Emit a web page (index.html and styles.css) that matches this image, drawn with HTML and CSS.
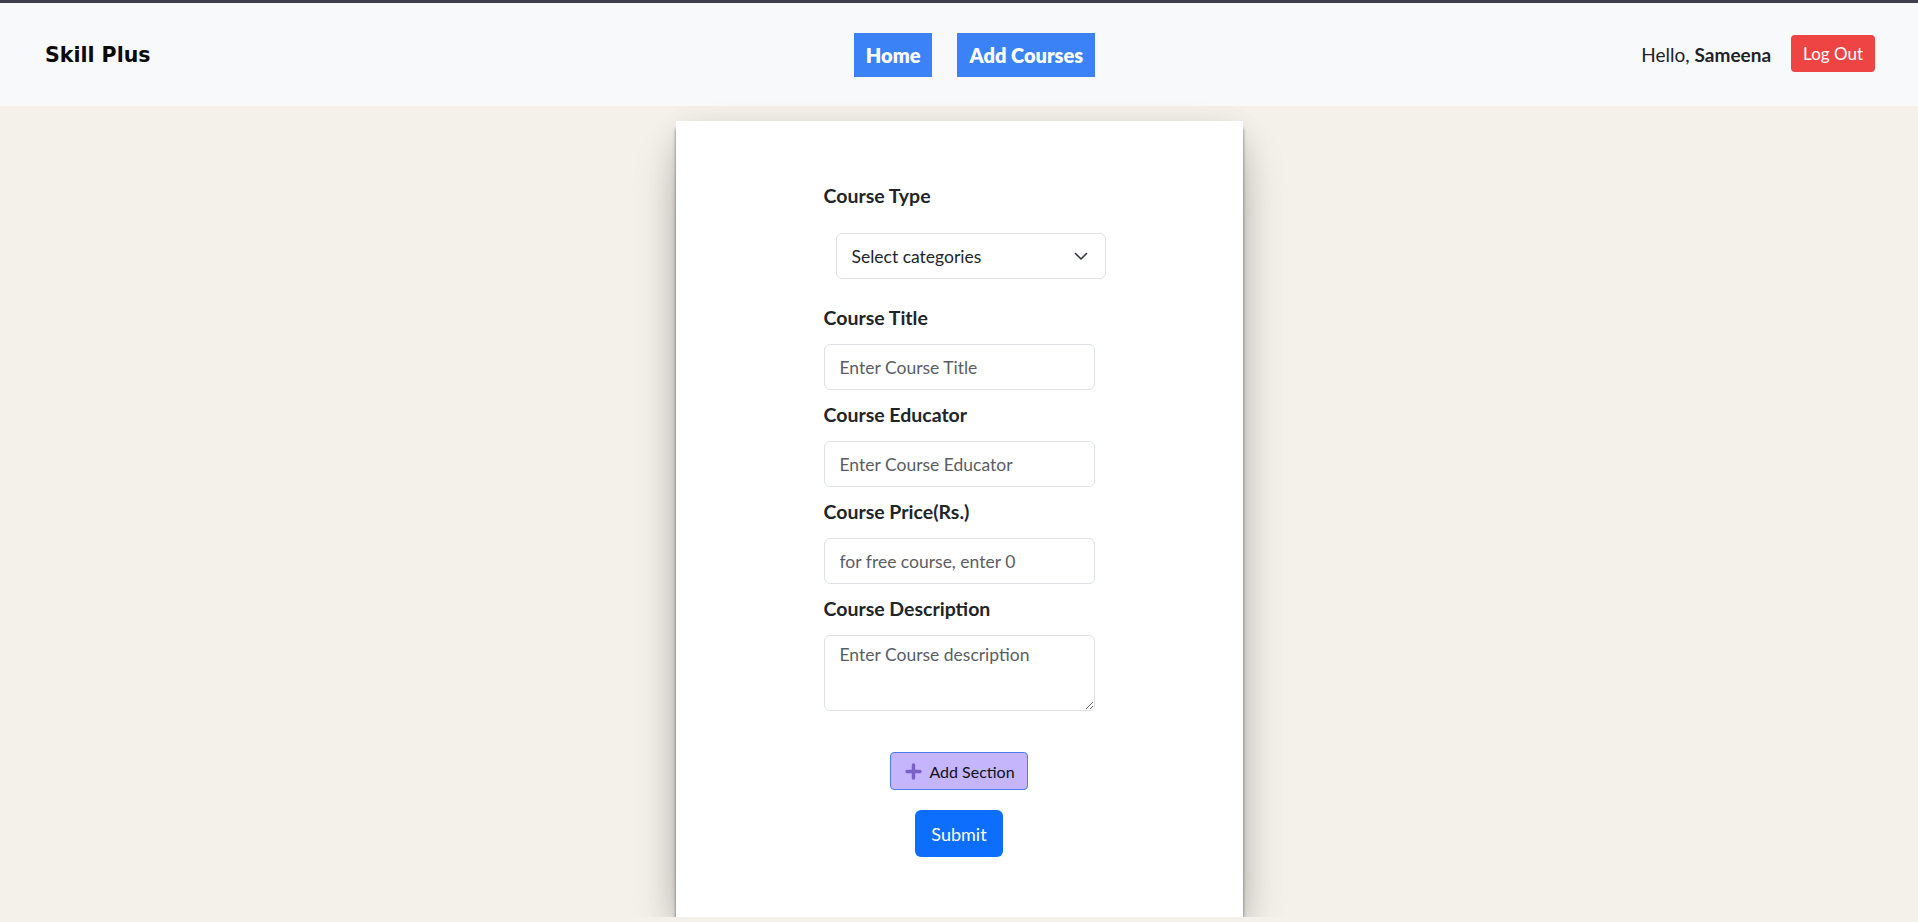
FILE: index.html
```html
<!DOCTYPE html>
<html lang="en">
<head>
<meta charset="utf-8">
<title>Skill Plus</title>
<link rel="stylesheet" href="styles.css">
</head>
<body>
<header class="navbar">
  <div class="brand">Skill Plus</div>
  <nav class="nav-links">
    <a class="nav-btn" href="#">Home</a>
    <a class="nav-btn" href="#">Add Courses</a>
  </nav>
  <div class="user">
    <span class="hello">Hello, <b>Sameena</b></span>
    <button class="logout" type="button">Log Out</button>
  </div>
</header>
<main class="page">
  <section class="card">
    <form class="course-form">
      <div class="field">
        <label class="field-label">Course Type</label>
        <div class="select-wrap">
          <select class="select">
            <option>Select categories</option>
          </select>
          <svg class="chev" width="14" height="9" viewBox="0 0 14 9"><path d="M1.5 1.5 L7 7 L12.5 1.5" fill="none" stroke="#343a40" stroke-width="1.6" stroke-linecap="round" stroke-linejoin="round"/></svg>
        </div>
      </div>
      <div class="field">
        <label class="field-label">Course Title</label>
        <input class="input" type="text" placeholder="Enter Course Title">
      </div>
      <div class="field">
        <label class="field-label">Course Educator</label>
        <input class="input" type="text" placeholder="Enter Course Educator">
      </div>
      <div class="field">
        <label class="field-label">Course Price(Rs.)</label>
        <input class="input" type="text" placeholder="for free course, enter 0">
      </div>
      <div class="field">
        <label class="field-label">Course Description</label>
        <textarea class="input textarea" placeholder="Enter Course description"></textarea>
      </div>
      <div class="actions">
        <button class="add-section" type="button">
          <svg class="plus" width="17" height="17" viewBox="0 0 17 17"><path d="M8.5 2 V15 M2 8.5 H15" stroke="#7b5fc7" stroke-width="3.4" stroke-linecap="round"/></svg>
          <span>Add Section</span>
        </button>
        <button class="submit" type="button">Submit</button>
      </div>
    </form>
  </section>
</main>
</body>
</html>
```

FILE: styles.css
```css
* { box-sizing: border-box; }

html, body {
  margin: 0;
  padding: 0;
}

body {
  background: #f4f1ea;
  font-family: "Lato", "Open Sans", sans-serif;
  color: #212529;
  overflow: hidden;
}

.navbar {
  display: grid;
  grid-template-columns: 1fr auto 1fr;
  align-items: center;
  height: 106px;
  padding: 0 43px 0 45px;
  background: #f8f9fb;
  border-top: 3px solid #3e3e4c;
}

.brand {
  font-family: "DejaVu Sans", "Liberation Sans", sans-serif;
  font-weight: bold;
  font-size: 20.5px;
  color: #0b0b0b;
  padding-top: 1px;
}

.nav-links {
  display: flex;
  gap: 25px;
  padding-left: 29px;
}

.nav-btn {
  display: flex;
  align-items: center;
  height: 44px;
  padding: 0 12px;
  background: #3b82f6;
  color: #ffffff;
  font-weight: 800;
  font-size: 20px;
  text-decoration: none;
}

.user {
  justify-self: end;
  display: flex;
  align-items: center;
  gap: 20px;
}

.hello {
  font-size: 19px;
  color: #1f2328;
}

.hello b { font-weight: 700; }

.logout {
  height: 37px;
  padding: 0 12px;
  border: none;
  border-radius: 4px;
  background: #ef4444;
  color: #ffffff;
  font-family: "Lato", sans-serif;
  font-size: 17px;
  margin-top: -2px;
}

.page {
  display: flex;
  justify-content: center;
  padding-top: 15px;
}

.card {
  width: 567px;
  background: #ffffff;
  padding: 63px 0 60px;
  display: flex;
  justify-content: center;
  box-shadow: 0 8px 3px 0 rgba(60, 66, 84, 0.72),
              0 25px 50px -12px rgba(0, 0, 0, 0.32),
              0 10px 30px -4px rgba(0, 0, 0, 0.16);
}

.course-form {
  width: 271px;
  display: flex;
  flex-direction: column;
}

.field {
  display: flex;
  flex-direction: column;
  margin-bottom: 13px;
}

.field-label {
  display: block;
  font-weight: 700;
  font-size: 19.5px;
  line-height: 24px;
  margin-bottom: 14px;
  color: #212529;
}

.select-wrap {
  position: relative;
  width: 270px;
  margin: 11px 0 14px 12px;
}

.select {
  width: 270px;
  height: 46px;
  appearance: none;
  -webkit-appearance: none;
  border: 1px solid #dee2e6;
  border-radius: 6px;
  background: #ffffff;
  padding: 0 15px;
  font-family: "Lato", sans-serif;
  font-size: 17.5px;
  color: #212529;
}

.chev {
  position: absolute;
  right: 18px;
  top: 19px;
}

.input {
  width: 271px;
  height: 46px;
  border: 1px solid #dee2e6;
  border-radius: 6px;
  padding: 0 15px;
  font-family: "Lato", sans-serif;
  font-size: 17.5px;
  color: #212529;
  background: #ffffff;
}

.input::placeholder {
  color: #5a5e63;
}

.textarea {
  height: 76px;
  padding: 8px 15px;
  resize: vertical;
  display: block;
}

.actions {
  display: flex;
  flex-direction: column;
  align-items: center;
  margin-top: 28px;
}

.add-section {
  display: flex;
  align-items: center;
  gap: 7px;
  height: 38px;
  padding: 0 12px 0 14px;
  background: #c4b5fd;
  border: 1px solid #4c7ee8;
  border-radius: 4px;
  font-family: "Lato", sans-serif;
  font-size: 16px;
  color: #111111;
}

.submit {
  margin-top: 20px;
  height: 47px;
  padding: 0 16px;
  border: none;
  border-radius: 6px;
  background: #0d6efd;
  color: #ffffff;
  font-family: "Lato", sans-serif;
  font-size: 18px;
}
```
